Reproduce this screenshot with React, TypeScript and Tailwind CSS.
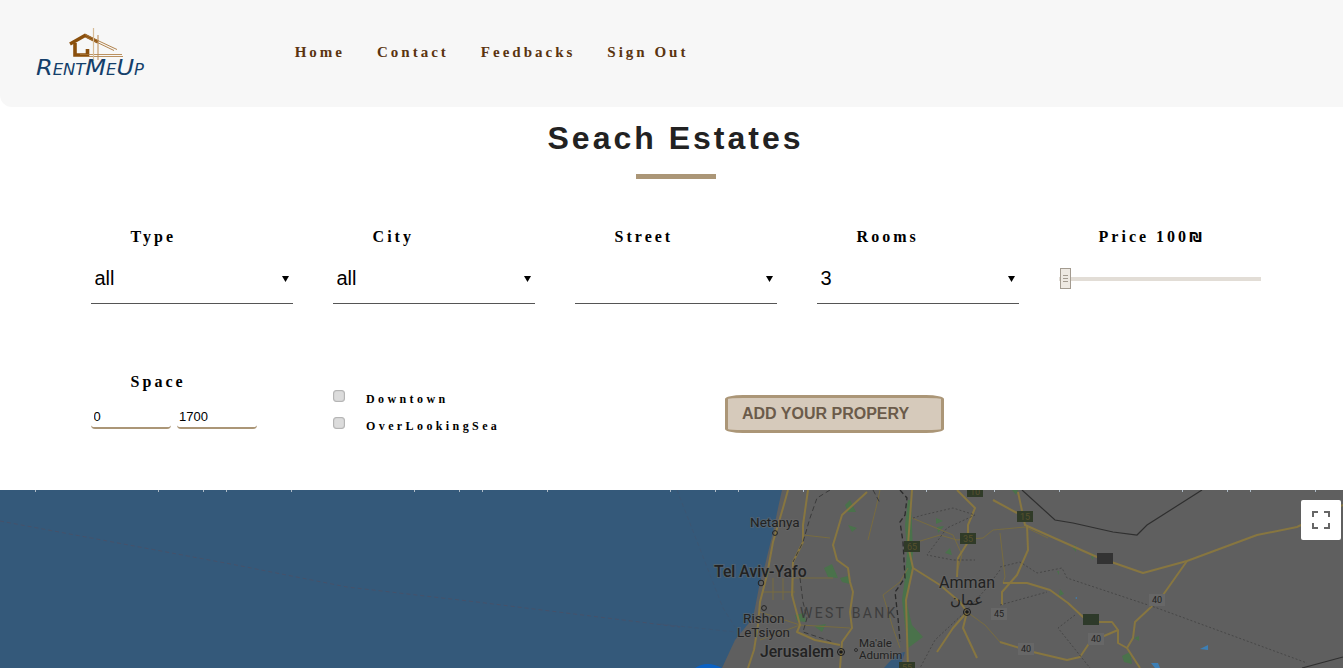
const serif = "font-['Liberation_Serif',serif]";

function Logo() {
  return (
    <svg width="112" height="54" viewBox="34 24 112 54" className="block">
      <path d="M70 41 85 32.5 98 39" fill="none" stroke="#8a4f0c" strokeWidth="3.4" />
      <path d="M75 40v12h12.5V46" fill="none" stroke="#8a4f0c" strokeWidth="3.6" />
      <path d="M85 31.5 117 46.5M86 34 114 47.5" fill="none" stroke="#a9763a" strokeWidth="0.9" />
      <path d="M80 51.5H122M78 53.5H123" fill="none" stroke="#a9763a" strokeWidth="0.8" />
      <path d="M93.5 25V58" stroke="#d8bc98" strokeWidth="1.2" />
      <path d="M98 32V57" stroke="#b98a55" strokeWidth="1" />
      <text
        x="36"
        y="72"
        textLength="108"
        lengthAdjust="spacingAndGlyphs"
        fontFamily="'DejaVu Sans', sans-serif"
        fontStyle="italic"
        fontSize="22"
        fill="#143f6b"
        style={{ fontVariant: "small-caps" }}
      >
        RentMeUp
      </text>
    </svg>
  );
}

function Field({ label, value, options }: { label: string; value: string; options: string[] }) {
  return (
    <div>
      <div className={`${serif} pl-[39.6px] text-[16px] leading-[18px] font-bold tracking-[3px] text-black`}>{label}</div>
      <div className="relative mt-2 w-[202px]">
        <select
          defaultValue={value}
          className="block h-[50px] w-full appearance-none border-b border-[#555] pb-[2px] pl-[3.5px] font-['Liberation_Sans',sans-serif] text-[20px] text-black"
        >
          {options.map((o) => (
            <option key={o} value={o}>
              {o}
            </option>
          ))}
        </select>
        <svg width="7" height="6" viewBox="0 0 7 6" className="pointer-events-none absolute right-[4px] top-[22px]">
          <path d="M0 0H7L3.5 6Z" fill="#000" />
        </svg>
      </div>
    </div>
  );
}

function Check({ label }: { label: string }) {
  return (
    <label className="flex h-[27px] items-start">
      <input
        type="checkbox"
        className="h-3 w-3 appearance-none rounded-[3px] border border-[#b5b5b5] bg-[#dcdcdc] shadow-[inset_0_0_1px_#999]"
      />
      <span className={`${serif} ml-[21px] mt-[2px] text-[12px] leading-[15px] font-bold tracking-[3.4px] text-black`}>
        {label}
      </span>
    </label>
  );
}

const ticks = [35, 158, 203, 226, 291, 414, 459, 482, 547, 670, 715, 738, 803, 926, 971, 994, 1059, 1182, 1227, 1250, 1315];

const mainRoads = [
  "M788 490 783 508 773 542 767 575 760 602 758 625 754 650 748 668",
  "M808 490 803 525 803 542 793 562 792 595 800 625 797 632 815 640 840 645",
  "M867 492 842 515 833 545 837 560 848 568 850 582 853 592 850 612 852 628 842 642 840 668",
  "M912 490 908 545 913 568 906 600 908 668",
  "M1018 492 1025 525 1097 557 1143 573 1187 561 1257 535 1297 527 1343 505",
  "M1187 561 1163 595 1150 608 1135 622 1133 638 1127 648 1140 668",
  "M1027 525 1028 550 1017 575 1002 592 1002 605",
  "M1003 583 1027 583 1050 590 1068 603 1083 617 1098 622 1112 622 1118 630 1118 643 1127 648",
  "M1118 630 1090 642 1080 657 1067 660 1033 652 1000 642",
  "M957 490 975 508 968 525 968 542 958 558 957 577",
  "M993 500 1017 513",
  "M913 568 940 585 960 602 967 612 953 628 937 652",
  "M967 612 963 628 977 658",
];

const thinRoads = [
  "M917 542 940 535 957 540 983 538 993 530 1025 527 1048 538",
  "M1000 533 1005 577 1003 583",
  "M912 518 953 535 962 555 957 572",
  "M793 578 833 578",
  "M803 535 830 538",
  "M883 595 900 582 908 568",
  "M883 595 893 628 900 648",
  "M773 578V600M783 578V600M793 578V600M762 592 795 592",
  "M760 612 800 625 850 628",
  "M800 625 760 640",
  "M880 490 876 508 868 540",
  "M1000 642 985 625 967 612",
];

const dotted = [
  "M1000 567 1020 562 1037 573 1062 568 1067 578 1157 608 1307 663",
  "M1000 605 1047 592",
  "M1075 615 1058 628 1090 668",
  "M913 518 923 515 953 508 975 515 947 528 927 555 953 560 975 560",
  "M1000 570 985 590 965 612 935 640 920 668",
];

const green = [
  "M908 500 911 500 913 552 911 578 906 600 912 625 923 637 908 648 905 625 902 600 905 578 907 552 905 525Z",
  "M845 505 850 500 856 512 848 512Z",
  "M848 525 857 528 852 532Z",
  "M824 568 832 564 838 578 828 577Z",
  "M840 578 848 576 850 584 842 582Z",
  "M795 615 804 613 806 622 797 621Z",
  "M814 626 826 624 822 632Z",
  "M936 518 943 521 936 524Z",
  "M937 527 944 526 938 533Z",
  "M945 553 950 548 952 555Z",
  "M1012 490 1018 490 1016 495Z",
  "M1072 547 1076 545 1076 552Z",
  "M1091 557 1094 553 1093 560Z",
  "M1057 571 1059 571 1059 575Z",
  "M1060 589 1064 594 1059 596Z",
  "M1134 638 1139 636 1139 641Z",
  "M1122 656 1130 652 1132 664 1124 662Z",
];

const shields = [
  { x: 967, y: 489, w: 16, h: 8, fill: "#303b28", t: "10" },
  { x: 1017, y: 511, w: 16, h: 11, fill: "#303b28", t: "15" },
  { x: 960, y: 533, w: 16, h: 11, fill: "#303b28", t: "35" },
  { x: 904, y: 541, w: 16, h: 11, fill: "#303b28", t: "65" },
  { x: 899, y: 662, w: 16, h: 11, fill: "#303b28", t: "55" },
  { x: 1097, y: 553, w: 16, h: 11, fill: "#333333", t: "" },
  { x: 1083, y: 614, w: 16, h: 11, fill: "#2e3a2a", t: "" },
];

const plates = [
  { x: 1157, y: 603, t: "40" },
  { x: 1096, y: 642, t: "40" },
  { x: 1026, y: 652, t: "40" },
  { x: 999, y: 617, t: "45" },
];

function MapLabel({ x, y, size, weight, children, spacing }: { x: number; y: number; size: number; weight?: number; children: string; spacing?: number }) {
  return (
    <text
      x={x}
      y={y}
      fontFamily="Roboto, 'Noto Sans', sans-serif"
      fontSize={size}
      fontWeight={weight ?? 400}
      letterSpacing={spacing ?? 0}
      fill="#222222"
      stroke="#6a6a6a"
      strokeWidth="2"
      strokeOpacity="0.55"
      style={{ paintOrder: "stroke" }}
    >
      {children}
    </text>
  );
}

function MapArt() {
  return (
    <svg width="1343" height="178" viewBox="0 490 1343 178" className="block h-full w-full">
      <rect x="0" y="490" width="1343" height="178" fill="#34597a" />
      <path d="M0 521 236 565 347 587 477 602 680 627" fill="none" stroke="#4a4f66" strokeWidth="0.8" strokeDasharray="4 3" />
      <path d="M677 490 723 608 735 627M660 624 735 632" fill="none" stroke="#3d5470" strokeWidth="0.8" strokeDasharray="4 3" />
      <path d="M782 490 778 508 773 532 765 565 760 582 753 618 735 640 722 668H1343V490Z" fill="#5f5f5f" />
      {ticks.map((x) => (
        <rect key={x} x={x} y="490" width="1" height="2" fill="#aebbc7" />
      ))}
      {green.map((d) => (
        <path key={d} d={d} fill="#4a724b" />
      ))}
      <path d="M905 652 900 668H884Q892 658 900 653Z" fill="#34597a" />
      <path d="M1200 649 1208 645 1208 650Z M1151 663 1158 663 1160 668 1155 668Z M1075 598 1077 597 1077 599Z" fill="#3d7fb5" />
      <path d="M695 668Q707 660 722 668Z" fill="#0b62c4" />
      {thinRoads.map((d) => (
        <path key={d} d={d} fill="none" stroke="#786c40" strokeWidth="1" />
      ))}
      {mainRoads.map((d) => (
        <path key={d} d={d} fill="none" stroke="#877640" strokeWidth="2" strokeLinejoin="round" />
      ))}
      {dotted.map((d) => (
        <path key={d} d={d} fill="none" stroke="#474747" strokeWidth="1" strokeDasharray="2 2" />
      ))}
      <path d="M900 490 907 498 905 515 900 522 903 542 905 578 895 592 898 618 900 642" fill="none" stroke="#2b2b2b" strokeWidth="1.3" strokeDasharray="5 3" />
      <path d="M830 490 817 498 810 518 803 542 793 562M873 490 880 503M800 578 803 602 807 618 803 632 833 642" fill="none" stroke="#3b3b3b" strokeWidth="1" strokeDasharray="5 3" />
      <path d="M1022 490 1055 520 1073 523 1113 532 1137 535 1147 525 1202 490M1302 668 1343 657" fill="none" stroke="#2f2f2f" strokeWidth="1.2" />
      {shields.map((s) => (
        <g key={s.x}>
          <rect x={s.x} y={s.y} width={s.w} height={s.h} fill={s.fill} />
          {s.t && (
            <text x={s.x + 8} y={s.y + s.h - 2} textAnchor="middle" fontFamily="Roboto, sans-serif" fontSize="9" fill="#57512c">
              {s.t}
            </text>
          )}
        </g>
      ))}
      {plates.map((p) => (
        <g key={p.x}>
          <rect x={p.x - 8} y={p.y - 9} width="16" height="12" fill="#676767" />
          <text x={p.x} y={p.y} textAnchor="middle" fontFamily="Roboto, sans-serif" fontSize="9" fill="#222222">
            {p.t}
          </text>
        </g>
      ))}
      <MapLabel x={750} y={527} size={13.5}>Netanya</MapLabel>
      <MapLabel x={714} y={577} size={15.8} weight={500}>Tel Aviv-Yafo</MapLabel>
      <MapLabel x={743} y={623} size={13.6}>Rishon</MapLabel>
      <MapLabel x={737} y={637} size={13.4}>LeTsiyon</MapLabel>
      <MapLabel x={760} y={657} size={15.7} weight={500}>Jerusalem</MapLabel>
      <MapLabel x={859} y={647} size={11.5}>Ma'ale</MapLabel>
      <MapLabel x={859} y={659} size={11.5}>Adumim</MapLabel>
      <text x={800} y={618} fontFamily="Roboto, sans-serif" fontSize="14" letterSpacing="2.3" fill="#3d3d3d">WEST BANK</text>
      <MapLabel x={939} y={588} size={16}>Amman</MapLabel>
      <text x={950} y={605} fontFamily="'DejaVu Sans', 'Noto Sans', sans-serif" fontSize="15" fill="#222222">عمان</text>
      <circle cx="775" cy="533" r="2.4" fill="none" stroke="#222" strokeWidth="1" />
      <circle cx="761" cy="583" r="2.8" fill="none" stroke="#222" strokeWidth="1" />
      <circle cx="764" cy="608" r="2.4" fill="none" stroke="#222" strokeWidth="1" />
      <circle cx="856" cy="650" r="1.5" fill="none" stroke="#222" strokeWidth="0.8" />
      <circle cx="841" cy="652" r="3.5" fill="none" stroke="#1a1a1a" strokeWidth="1" />
      <circle cx="841" cy="652" r="1.8" fill="#1a1a1a" />
      <circle cx="967" cy="612" r="3.5" fill="none" stroke="#1a1a1a" strokeWidth="1" />
      <circle cx="967" cy="612" r="1.8" fill="#1a1a1a" />
    </svg>
  );
}

export default function App() {
  const nav = ["Home", "Contact", "Feedbacks", "Sign Out"];
  return (
    <div className="flex h-[668px] flex-col overflow-hidden bg-white font-['Liberation_Sans',sans-serif]">
      <header className="flex h-[107px] shrink-0 items-center rounded-bl-[12px] bg-[#f7f7f7] pl-[34px]">
        <Logo />
        <nav className={`${serif} ml-[148.7px] -mt-[2px] flex gap-[32px] text-[15px] font-bold tracking-[3px] text-[#5a3410]`}>
          {nav.map((n) => (
            <a key={n}>{n}</a>
          ))}
        </nav>
      </header>

      <main className="h-[383px] shrink-0">
        <h1 className="mt-[13px] pl-2 text-center text-[32px] leading-[36px] font-bold tracking-[3px] text-[#222]">Seach Estates</h1>
        <div className="mx-auto mt-[18px] h-[5px] w-[80px] translate-x-[4px] bg-[#ab9677]" />
        <div className="ml-[91px] mt-[49px] grid grid-cols-[repeat(5,202px)] gap-x-10 gap-y-[69px]">
          <Field label="Type" value="all" options={["all"]} />
          <Field label="City" value="all" options={["all"]} />
          <Field label="Street" value="" options={[""]} />
          <Field label="Rooms" value="3" options={["3"]} />
          <div>
            <div className={`${serif} pl-[39.6px] text-[16px] leading-[18px] font-bold tracking-[3px] text-black`}>
              Price 100<span className="font-['DejaVu_Sans',sans-serif] text-[14px] tracking-normal">₪</span>
            </div>
            <div className="relative mt-[31px] h-1 w-[202px] bg-[#e2ddd6]">
              <div className="absolute -top-[9px] left-[1px] flex h-[21px] w-[11px] flex-col items-center justify-center gap-[2px] border border-[#a39b90] bg-[#eee9e2]">
                <span className="h-px w-[5px] bg-[#a39b90]" />
                <span className="h-px w-[5px] bg-[#a39b90]" />
                <span className="h-px w-[5px] bg-[#a39b90]" />
              </div>
            </div>
          </div>

          <div>
            <div className={`${serif} pl-[39.6px] text-[16px] leading-[18px] font-bold tracking-[3px] text-black`}>Space</div>
            <div className="mt-4 flex gap-[6px]">
              <input
                defaultValue="0"
                className="h-[22px] w-20 rounded-[4px] border-b-2 border-[#ab9677] pb-[2px] pl-[2.5px] text-[13px] text-black outline-none"
              />
              <input
                defaultValue="1700"
                className="h-[22px] w-20 rounded-[4px] border-b-2 border-[#ab9677] pb-[2px] pl-[2px] text-[13px] text-black outline-none"
              />
            </div>
          </div>
          <div className="pt-[17px]">
            <Check label="Downtown" />
            <Check label="OverLookingSea" />
          </div>
          <div className="col-span-3 pl-[150px] pt-[22px]">
            <button className="h-[38px] w-[219px] rounded-[18px/4px] border-[3px] border-[#ab9677] bg-[#d6cabb] pl-[14px] text-left text-[16px] leading-[30px] font-bold text-[#6b5b4a]">
              ADD YOUR PROPERY
            </button>
          </div>
        </div>
      </main>

      <section className="relative min-h-0 flex-1">
        <MapArt />
        <button className="absolute right-[2px] top-[10px] flex h-10 w-10 items-center justify-center rounded-[2px] bg-white">
          <svg width="18" height="18" viewBox="0 0 18 18" fill="none" stroke="#666" strokeWidth="2">
            <path d="M1 6V1H6M12 1H17V6M17 12V17H12M6 17H1V12" />
          </svg>
        </button>
      </section>
    </div>
  );
}
